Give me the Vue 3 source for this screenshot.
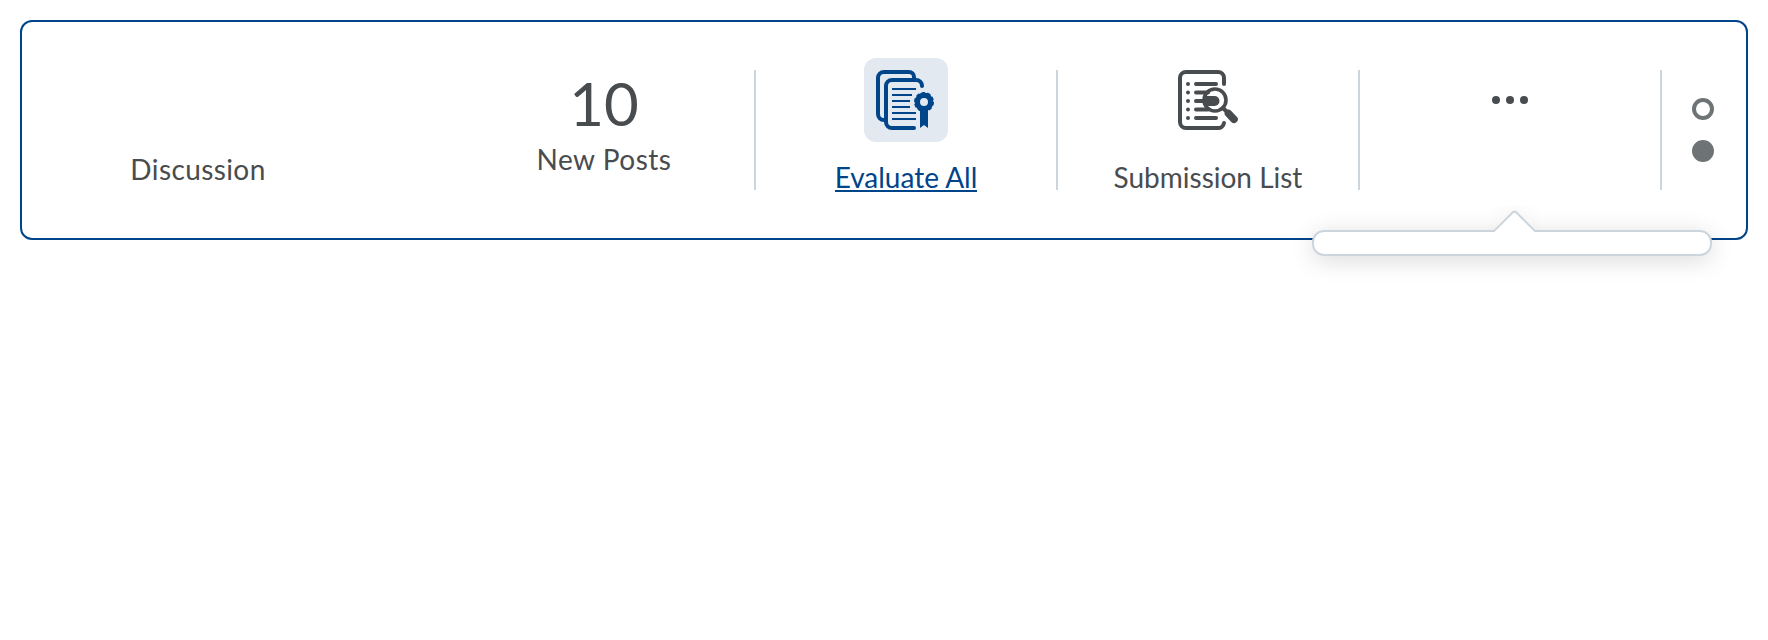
<script setup>
const lines = [
  [19, 40], [25, 36], [31, 34], [37, 34], [43, 40], [49, 40],
]
const rows = [
  [14, 38], [22.6, 30], [31, 30], [39.4, 30], [48, 38],
]
</script>

<template>
  <main class="card">
    <section class="title">Discussion</section>

    <section class="cell count">
      <div class="number">10</div>
      <div class="label">New Posts</div>
    </section>

    <section class="cell action active">
      <div class="icon-box">
        <svg width="60" height="60" viewBox="0 0 60 60" fill="none" stroke="currentColor">
          <g stroke-width="4" stroke-linecap="round">
            <path d="M38 8V7a5 5 0 0 0-5-5H8a6 6 0 0 0-6 6v36a6 6 0 0 0 6 6h1" />
            <path d="M46 16a6 6 0 0 0-6-6H16a6 6 0 0 0-6 6v36a6 6 0 0 0 6 6h22" />
          </g>
          <path v-for="l in lines" :key="l[0]" :d="`M16 ${l[0]}H${l[1]}`" stroke-width="2" />
          <circle cx="48" cy="32" r="6.7" stroke-width="5.4" />
          <circle cx="48" cy="32" r="9.2" stroke-width="1.6" stroke-dasharray="3.6 2.18" />
          <path d="M44 38h8v20l-4-3-4 3z" fill="currentColor" stroke="none" />
        </svg>
      </div>
      <div class="label">Evaluate All</div>
    </section>

    <section class="cell action">
      <div class="icon-box">
        <svg width="60" height="60" viewBox="0 0 60 60" fill="none" stroke="currentColor" stroke-width="4" stroke-linecap="round">
          <path d="M46 14V8a6 6 0 0 0-6-6H8a6 6 0 0 0-6 6v44a6 6 0 0 0 6 6h32a6 6 0 0 0 6-5" />
          <template v-for="r in rows" :key="r[0]">
            <path :d="`M10 ${r[0]}h.01`" />
            <path :d="`M18 ${r[0]}H${r[1]}`" />
          </template>
          <path d="M26 26h10.500a5 5 0 0 1 0 10H26z" fill="currentColor" stroke="none" />
          <circle cx="37" cy="30" r="11" stroke-width="3.6" />
          <path d="M45 38l5 5" />
          <path d="M50.500 43.500l5.500 5.800" stroke-width="7.6" />
        </svg>
      </div>
      <div class="label">Submission List</div>
    </section>

    <section class="cell more">
      <svg width="36" height="8" viewBox="0 0 36 8" fill="currentColor">
        <circle cx="4" cy="4" r="4" />
        <circle cx="18" cy="4" r="4" />
        <circle cx="32" cy="4" r="4" />
      </svg>
    </section>

    <nav class="pager">
      <span class="dot"></span>
      <span class="dot full"></span>
    </nav>

    <div class="dropdown">
      <div class="pointer"><div class="tip"></div></div>
    </div>
  </main>
</template>

<style>
html, body { height: 100%; background: #fff; }
body { display: flow-root; }
#app { display: flow-root; min-height: 100%; }
</style>

<style scoped>
* { box-sizing: border-box; }
.card {
  position: relative;
  display: flex;
  height: 220px;
  margin: 20px;
  border: 2px solid #004489;
  border-radius: 12px;
  color: #494c4e;
  font: 400 28px/40px Lato, sans-serif;
}
.title {
  width: 352px;
  margin-right: 80px;
  padding-top: 127px;
  text-align: center;
  letter-spacing: 0.4px;
}
.cell {
  display: flex;
  flex-direction: column;
  align-items: center;
  width: 302px;
  height: 120px;
  margin-top: 48px;
  border-right: 2px solid #cdd5dc;
  white-space: nowrap;
}
.number {
  margin-top: 3px;
  font-size: 60px;
  line-height: 60px;
}
.count .label {
  margin-top: 6px;
  letter-spacing: 0.5px;
}
.icon-box {
  flex: none;
  width: 84px;
  height: 84px;
  margin-top: -12px;
  padding: 12px;
  border-radius: 12px;
}
.icon-box svg { display: block; overflow: visible; }
.action .label { margin-top: 15px; }
.active { color: #004489; }
.active .icon-box { background: #e3e9f1; }
.active .label {
  height: 35px;
  line-height: 40px;
  border-bottom: 2px solid #004489;
}
.more svg { margin-top: 26px; }
.pager {
  display: flex;
  flex-direction: column;
  gap: 20px;
  margin: 76px 0 0 30px;
}
.dot {
  width: 22px;
  height: 22px;
  border: 4px solid #6e7376;
  border-radius: 50%;
}
.full { background: #6e7376; }
.dropdown {
  position: absolute;
  top: 208px;
  right: 34px;
  width: 400px;
  height: 26px;
  border: 2px solid #cdd5dc;
  border-radius: 12px;
  background: #fff;
  box-shadow: 0 4px 24px rgba(0, 0, 0, 0.15);
}
.pointer {
  position: absolute;
  top: -16px;
  left: 184px;
  width: 32px;
  height: 32px;
  clip-path: inset(-10px -10px 16px -14px);
}
.tip {
  width: 33px;
  height: 33px;
  margin: -0.5px;
  border: 2px solid #cdd5dc;
  border-radius: 4px;
  background: #fff;
  box-shadow: -8px -8px 24px -10px rgba(73, 76, 78, 0.2);
  transform: rotate(45deg);
}
</style>
